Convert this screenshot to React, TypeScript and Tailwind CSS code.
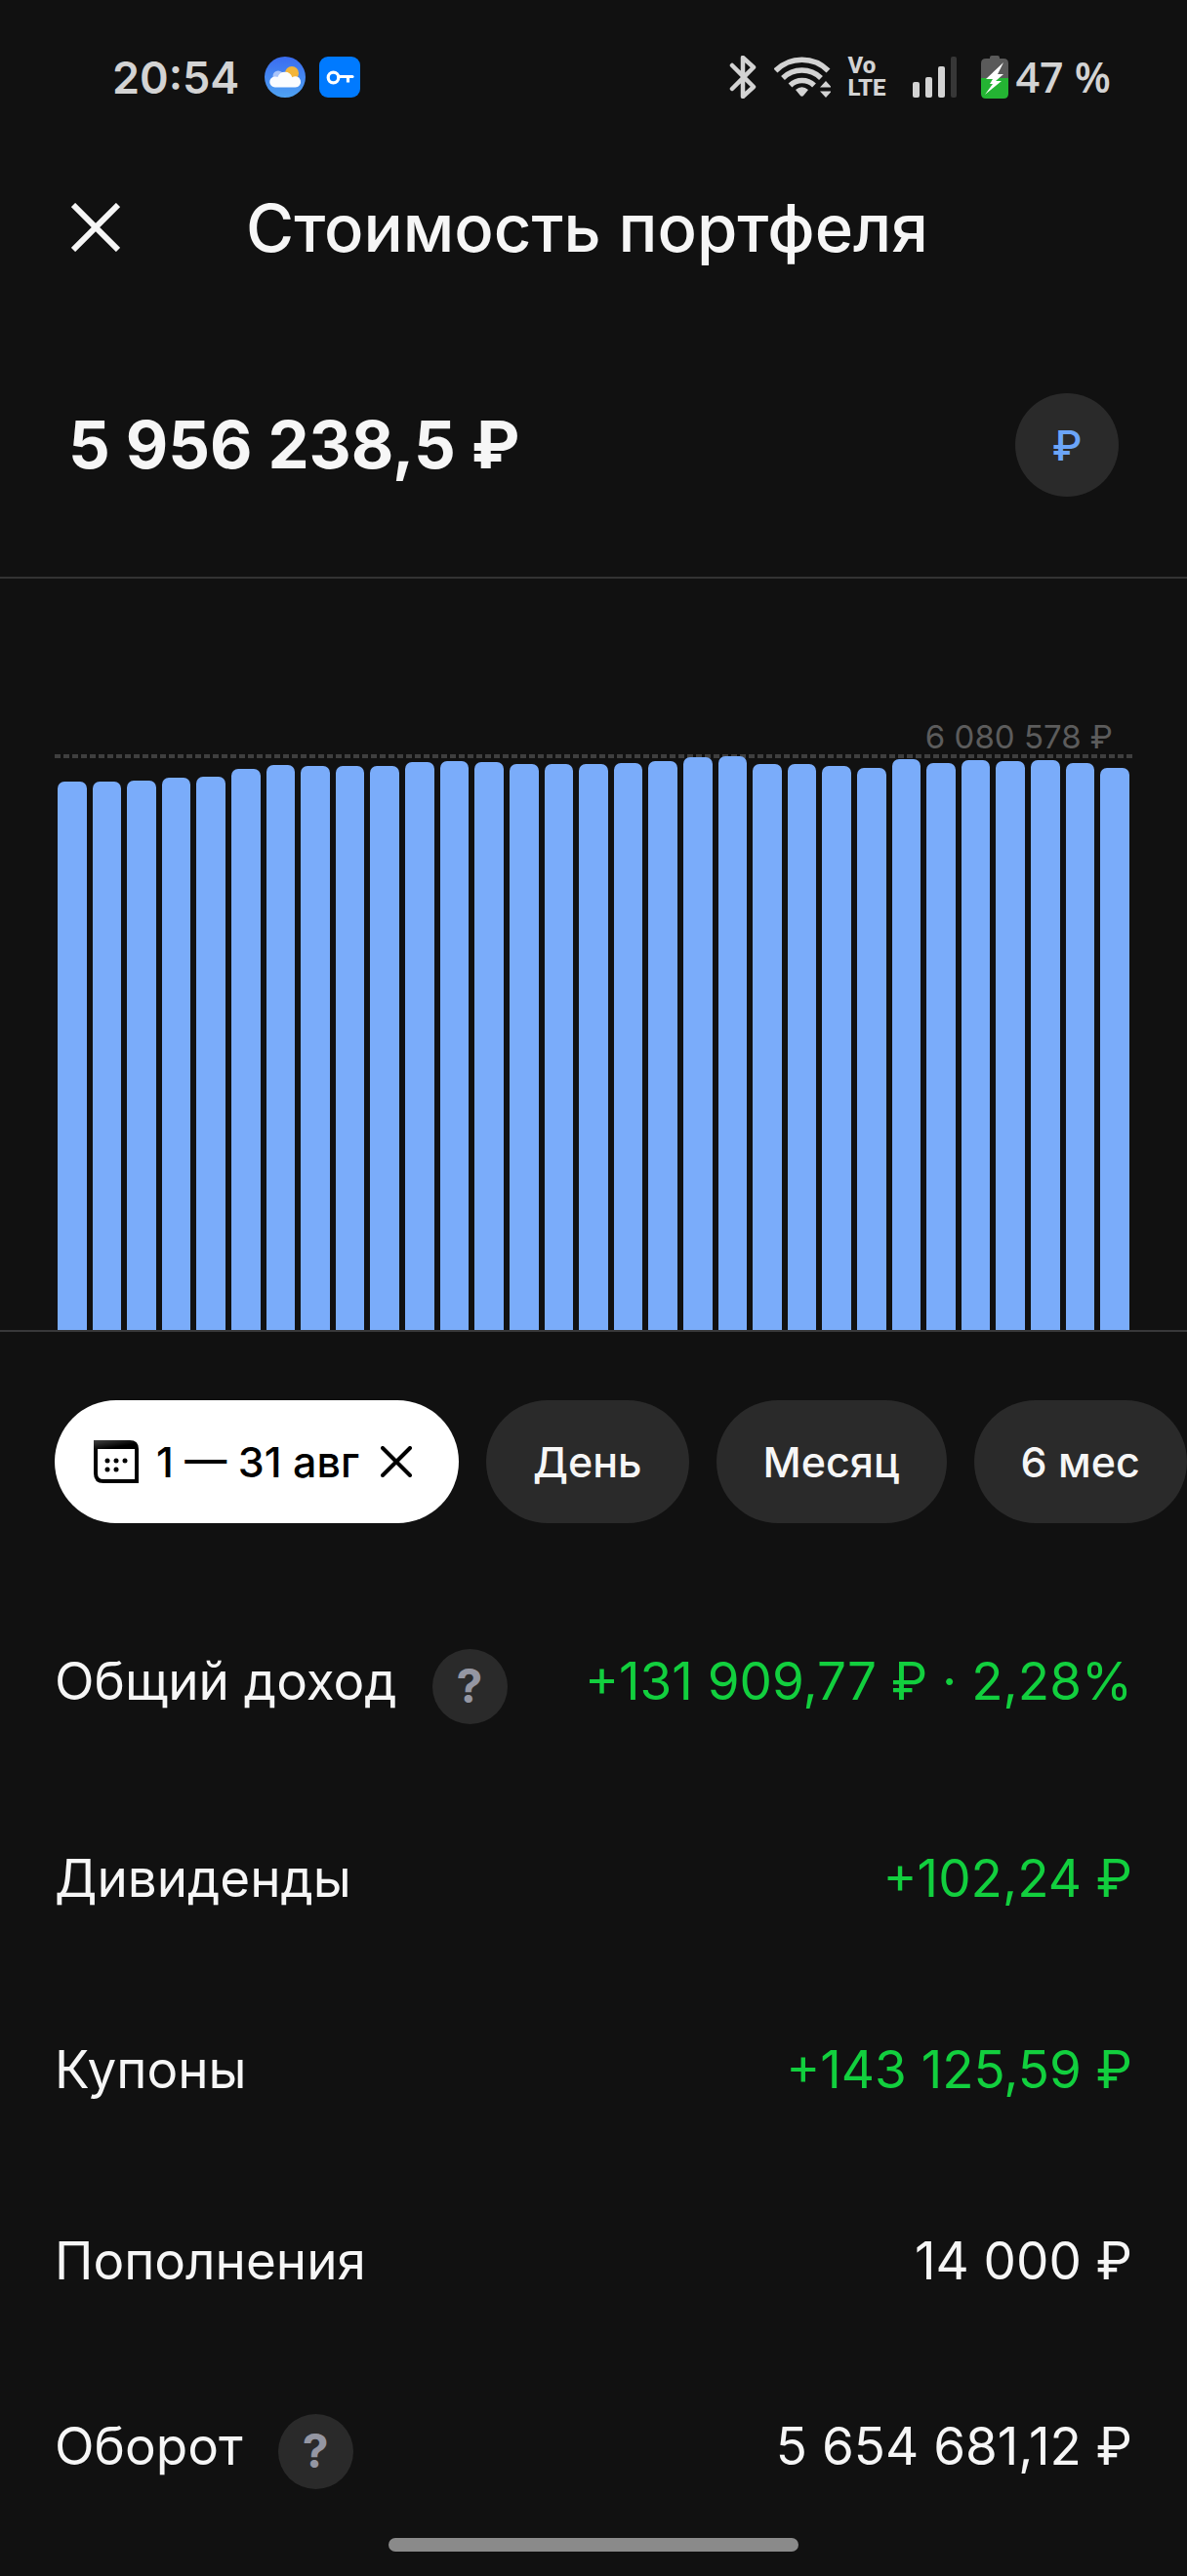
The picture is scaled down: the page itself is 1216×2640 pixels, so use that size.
import { useState } from 'react';

const PEAK_LABEL = '6 080 578 ₽';

// top of the chart scale, in thousands of roubles
const SCALE_MAX = 6101;

const dailyValues = [
  5812, 5812, 5822, 5848, 5863, 5946, 5988, 5977, 5977, 5982, 6019, 6029, 6019, 5995, 5995, 5998,
  6008, 6029, 6070, 6081, 5998, 5993, 5982, 5956, 6050, 6013, 6039, 6024, 6034, 6008, 5956,
];

const periods = ['День', 'Месяц', '6 мес'];

const stats = [
  { label: 'Общий доход', value: '+131 909,77 ₽ · 2,28%', positive: true, help: true },
  { label: 'Дивиденды', value: '+102,24 ₽', positive: true, help: false },
  { label: 'Купоны', value: '+143 125,59 ₽', positive: true, help: false },
  { label: 'Пополнения', value: '14 000 ₽', positive: false, help: false },
  { label: 'Оборот', value: '5 654 681,12 ₽', positive: false, help: true },
];

const WeatherIcon = () => (
  <svg className="h-[42px] w-[42px]" viewBox="0 0 42 42">
    <defs>
      <linearGradient id="sky" x1="0" y1="0" x2="0" y2="1">
        <stop offset="0" stopColor="#3a6cf0" />
        <stop offset="1" stopColor="#4fa3f2" />
      </linearGradient>
    </defs>
    <circle cx="21" cy="21" r="21" fill="url(#sky)" />
    <circle cx="28" cy="17" r="7" fill="#f3b53a" />
    <circle cx="14" cy="20" r="5.5" fill="#a9c4fa" />
    <path d="M11 31.5a5.5 5.5 0 0 1-.5-11c1.3 0 2 .2 3 .6a7.8 7.8 0 0 1 14.8.2 5.6 5.6 0 1 1 3.2 10.2z" fill="#fafcff" />
  </svg>
);

const KeyIcon = () => (
  <svg className="h-[42px] w-[42px]" viewBox="0 0 42 42" fill="none" stroke="#fff" strokeWidth="3.2">
    <rect width="42" height="42" rx="9" fill="#007aff" stroke="none" />
    <circle cx="14.5" cy="21.5" r="5.3" />
    <path d="M20 20.5h14" strokeLinecap="round" />
    <path d="M29.5 20.5v6" />
  </svg>
);

const BluetoothIcon = () => (
  <svg className="h-11 w-7" viewBox="0 0 28 44" fill="none" stroke="#d3d3d3" strokeWidth="4.5" strokeLinecap="round" strokeLinejoin="round">
    <path d="M3 10l22 22-11 10V2l11 10L3 34" />
  </svg>
);

const WifiIcon = () => (
  <svg className="h-[42px] w-[58px]" viewBox="0 0 58 42">
    <g fill="none" stroke="#d3d3d3" strokeWidth="5.5">
      <path d="M1.5 14.5a38 38 0 0 1 54 0" />
      <path d="M9 22a28 28 0 0 1 39 0" />
      <path d="M16.5 29.5a17.5 17.5 0 0 1 24.5 0" />
    </g>
    <path d="M22 34q6.5-5.5 13 0l-4.5 5.5q-2 2.5-4 0z" fill="#d3d3d3" />
    <path d="M53 25l6 6.5H47zM53 42l-6-6.5h12z" fill="#d3d3d3" />
  </svg>
);

const SignalIcon = () => (
  <svg className="h-[42px] w-[46px]" viewBox="0 0 46 42" fill="#d3d3d3">
    <rect x="0" y="26" width="7" height="16" rx="2" />
    <rect x="13" y="21" width="7" height="21" rx="2" />
    <rect x="26" y="10" width="7" height="32" rx="2" />
    <rect x="39" y="0" width="6" height="42" rx="2" fill="#373737" />
  </svg>
);

const BatteryIcon = () => (
  <svg className="h-11 w-7" viewBox="0 0 28 44">
    <path d="M9 3V2q0-2 2-2h6q2 0 2 2v1h4q5 0 5 5v16H0V8q0-5 5-5z" fill="#5a5a5a" />
    <path d="M0 23h28v16q0 5-5 5H5q-5 0-5-5z" fill="#24b433" />
    <path d="M23 7L5 24h7l-3 5h3L4 40l17-14h-6l8-7h-6z" fill="#fff" />
  </svg>
);

const CalendarIcon = () => (
  <svg className="h-11 w-[46px]" viewBox="0 0 46 44">
    <defs>
      <linearGradient id="calendarTop" x1="0" y1="0" x2="0.2" y2="1">
        <stop offset="0" stopColor="#444" />
        <stop offset="0.25" stopColor="#000" />
      </linearGradient>
    </defs>
    <path
      fillRule="evenodd"
      d="M0 0h37q9 0 9 9v35H10Q0 44 0 34zM4 9v25q0 6 6 6h32V9z"
      fill="url(#calendarTop)"
    />
    <g fill="#000">
      <circle cx="14" cy="21" r="2.5" />
      <circle cx="23" cy="21" r="2.5" />
      <circle cx="32" cy="21" r="2.5" />
      <circle cx="14" cy="30" r="2.5" />
      <circle cx="23" cy="30" r="2.5" />
    </g>
  </svg>
);

const StatusBar = () => (
  <div className="flex h-[158px] items-center justify-between pl-[115px] pr-[78px] text-[#d3d3d3]">
    <div className="flex items-center">
      <span className="w-[156px] text-[45px] font-semibold leading-none">20:54</span>
      <div className="flex gap-[14px]">
        <WeatherIcon />
        <KeyIcon />
      </div>
    </div>
    <div className="flex items-center">
      <BluetoothIcon />
      <div className="ml-[18px]">
        <WifiIcon />
      </div>
      <div className="ml-[18px] w-[42px] font-['Roboto',sans-serif] text-[24px] font-extrabold leading-[23px]">
        Vo
        <br />
        LTE
      </div>
      <div className="ml-6">
        <SignalIcon />
      </div>
      <div className="ml-6">
        <BatteryIcon />
      </div>
      <span className="ml-2 whitespace-nowrap pb-0.5 font-['Open_Sans',sans-serif] text-[43px] font-semibold leading-none">47 %</span>
    </div>
  </div>
);

const Chart = () => (
  <section className="border-b-2 border-[#38383a] px-14 pt-36">
    <div className="pr-5 text-right text-[33px] leading-[36px] text-[#5c5c5c]">{PEAK_LABEL}</div>
    <div className="relative h-[590px]">
      <div className="absolute inset-x-0 top-0 h-1 bg-[repeating-linear-gradient(90deg,#3f3f3f_0_6px,transparent_6px_9px)]" />
      <div className="relative flex h-full items-end gap-[6px] px-[3px]">
        {dailyValues.map((value, index) => (
          <div
            key={index}
            className="flex-1 rounded-t-[7px] bg-[#7aacfa]"
            style={{ height: `${(value / SCALE_MAX) * 100}%` }}
          />
        ))}
      </div>
    </div>
  </section>
);

const App = () => {
  const [period, setPeriod] = useState('');

  return (
    <main className="relative min-h-screen overflow-hidden bg-[#111111] font-['Inter',sans-serif] text-[#f6f6f6]">
      <StatusBar />

      <header className="flex h-[150px] items-center pl-[73px]">
        <button type="button" aria-label="Закрыть" className="w-[179px]">
          <svg className="h-[50px] w-[50px]" viewBox="0 0 50 50" stroke="#f6f6f6" strokeWidth="6">
            <path d="M2 2l46 46M48 2L2 48" />
          </svg>
        </button>
        <h1 className="whitespace-nowrap text-[67px] font-medium leading-none">Стоимость портфеля</h1>
      </header>

      <section className="flex items-center justify-between border-b-2 border-[#333333] px-[70px] pb-[82px] pt-[95px]">
        <div className="pb-0.5 text-[67px] font-bold leading-none">5 956 238,5 ₽</div>
        <button type="button" aria-label="Валюта: рубли" className="h-[106px] w-[106px] rounded-full bg-[#2a2a2a] text-[43px] font-medium leading-none text-[#6ba5f8]">
          ₽
        </button>
      </section>

      <Chart />

      <nav className="flex gap-7 pb-[69px] pl-14 pt-[70px] text-[43px] font-medium leading-none">
        <button type="button" className="flex h-[126px] w-[414px] shrink-0 items-center whitespace-nowrap rounded-full bg-white pl-10 text-black">
          <CalendarIcon />
          <span className="ml-[18px] w-[210px] text-left">1 — 31 авг</span>
          <svg className="ml-5 h-8 w-8" viewBox="0 0 32 32" stroke="#000" strokeWidth="4" strokeLinecap="round">
            <path d="M2 2l28 28M30 2L2 30" />
          </svg>
        </button>
        {periods.map((name) => (
          <button
            key={name}
            type="button"
            aria-pressed={period === name}
            onClick={() => setPeriod(name)}
            className="h-[126px] shrink-0 whitespace-nowrap rounded-full bg-[#2a2a2a] px-12"
          >
            {name}
          </button>
        ))}
      </nav>

      <dl className="px-14 text-[53px] leading-none">
        {stats.map((stat) => (
          <div key={stat.label} className="flex h-[196px] items-center justify-between whitespace-nowrap">
            <dt className="flex items-center gap-9">
              <span className={stat.help ? 'pb-2.5' : 'pt-0.5'}>{stat.label}</span>
              {stat.help && (
                <button type="button" aria-label="Подробнее" className="h-[77px] w-[77px] rounded-full bg-[#2a2a2a] text-[48px] font-bold leading-none text-[#9496a2]">
                  ?
                </button>
              )}
            </dt>
            <dd className={`${stat.help ? 'pb-2.5' : 'pt-0.5'} ${stat.positive ? 'text-[#12cf3e]' : ''}`}>
              {stat.value}
            </dd>
          </div>
        ))}
      </dl>

      <div className="absolute inset-x-0 bottom-[25px] flex justify-center">
        <div className="h-[14px] w-[420px] rounded-full bg-[#8a8a8a]" />
      </div>
    </main>
  );
};

export default App;
